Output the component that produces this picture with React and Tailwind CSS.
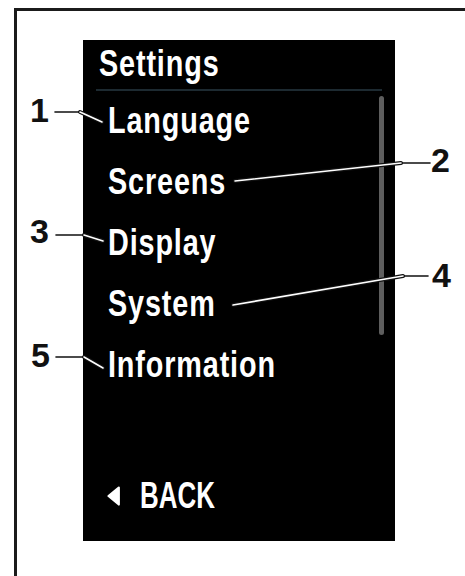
import React from 'react';

const items = ['Language', 'Screens', 'Display', 'System', 'Information'];

const callouts = [
  { n: '1', left: 30, top: 94 },
  { n: '2', left: 431, top: 144 },
  { n: '3', left: 30, top: 215 },
  { n: '4', left: 432, top: 259 },
  { n: '5', left: 31, top: 339 },
];

// leader lines: short thin piece by the number, then an outlined diagonal into the screen
const leaders = [
  { thin: 'M55 112 L80 112', diag: 'M80 112 L102 122' },
  { thin: 'M430 163 L401 163', diag: 'M401 163 L235 181' },
  { thin: 'M56 235 L84 235', diag: 'M84 235 L103 241' },
  { thin: 'M428 276 L403 276', diag: 'M403 276 L233 305' },
  { thin: 'M56 357 L84 357', diag: 'M84 357 L103 368' },
];

// condensed look: the narrow face is missing, so squeeze Liberation Sans Bold
const Cond = ({ children, className = '' }) => (
  <span className={`inline-block origin-left scale-x-[0.8] tracking-[0.03em] whitespace-nowrap ${className}`}>
    {children}
  </span>
);

const Screen = () => {
  return (
    <div className="w-[312px] h-[501px] bg-black flex flex-col text-white font-bold text-[36px]"
      style={{ fontFamily: '"Liberation Sans", Arial, sans-serif' }}>
      <div className="pl-[16px] h-[49px] leading-[47px]"><Cond>Settings</Cond></div>
      <div className="mx-[13px] h-[2px] bg-[#1d2a31]" />
      <div className="flex flex-1 pr-[11px]">
        <div className="flex-1 flex flex-col">
          {items.map((item) => (
            <div key={item} className="pl-[25px] h-[61px] leading-[59px]"><Cond>{item}</Cond></div>
          ))}
          <div className="mt-auto mb-[30px] pl-[24px] flex items-center gap-[20px] h-[30px]">
            <svg className="block w-[13px] h-[20px] min-w-[13px] shrink-0" width="13" height="20" viewBox="0 0 13 20">
              <polygon points="11.8,1.5 1.5,10 11.8,18.5" fill="#fff" stroke="#fff" strokeWidth="2.2" strokeLinejoin="round" />
            </svg>
            <span className="inline-block origin-left scale-x-[0.72] leading-none whitespace-nowrap">BACK</span>
          </div>
        </div>
        <div className="w-[5px] h-[239px] mt-[5px] rounded-full bg-[#5e5e5e]" />
      </div>
    </div>
  );
};

export default function App() {
  return (
    <div className="relative w-[465px] h-[576px] bg-white overflow-hidden">
      <div className="mt-[8px] ml-[14px] h-[568px] border-t-[3px] border-l-[3px] border-[#1b1b1b] pt-[29px] pl-[66px]">
        <Screen />
      </div>

      <svg className="absolute inset-0" width="465" height="576" viewBox="0 0 465 576">
        {leaders.map((l, i) => (
          <g key={i} fill="none" strokeLinecap="round">
            <path d={l.thin} stroke="#111" strokeWidth="1.6" />
            <path d={l.diag} stroke="#111" strokeWidth="4" />
            <path d={l.diag} stroke="#fff" strokeWidth="1.6" />
          </g>
        ))}
      </svg>

      {callouts.map((c) => (
        <span key={c.n}
          className="absolute text-[34px] leading-[33px] font-bold text-[#111]"
          style={{ left: c.left, top: c.top, fontFamily: '"Liberation Sans", Arial, sans-serif' }}>
          {c.n}
        </span>
      ))}
    </div>
  );
}
